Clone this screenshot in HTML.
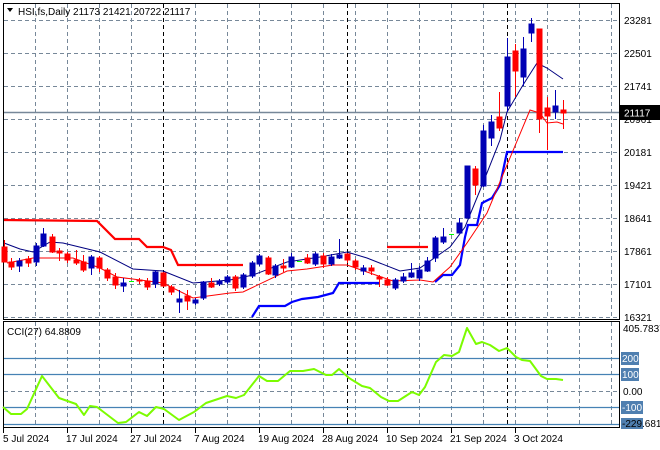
<!DOCTYPE html>
<html><head><meta charset="utf-8"><style>
html,body{margin:0;padding:0;background:#fff;}
svg{display:block;font-family:"Liberation Sans",sans-serif;}
</style></head><body>
<svg width="660" height="450" viewBox="0 0 660 450" xmlns="http://www.w3.org/2000/svg">
<rect width="660" height="450" fill="#fff"/>
<g stroke="#778899" stroke-width="1" stroke-dasharray="4,3" fill="none">
<path d="M4 20.5H619M4 53.5H619M4 86.5H619M4 119.5H619M4 152.5H619M4 185.5H619M4 218.5H619M4 251.5H619M4 284.5H619M4 317.5H619"/>
<path d="M35.5 4V320M67.5 4V320M99.5 4V320M131.5 4V320M195.5 4V320M227.5 4V320M259.5 4V320M291.5 4V320M323.5 4V320M355.5 4V320M387.5 4V320M419.5 4V320M451.5 4V320M483.5 4V320M515.5 4V320M547.5 4V320M579.5 4V320M611.5 4V320"/>
<path d="M35.5 322V425M67.5 322V425M99.5 322V425M131.5 322V425M195.5 322V425M227.5 322V425M259.5 322V425M291.5 322V425M323.5 322V425M355.5 322V425M387.5 322V425M419.5 322V425M451.5 322V425M483.5 322V425M515.5 322V425M547.5 322V425M579.5 322V425M611.5 322V425"/>
<path d="M4 391.5H619"/>
</g>
<g stroke="#000" stroke-width="1" stroke-dasharray="4,3">
<path d="M163.5 4V320M347.5 4V320M507.5 4V320M163.5 322V425M347.5 322V425M507.5 322V425"/>
</g>
<path d="M4 112.5H619" stroke="#778899" stroke-width="1.5"/>
<g stroke="#4682b4" stroke-width="1.2">
<path d="M4 358.5H619M4 374.5H619M4 407.5H619M4 424.5H619"/>
</g>
<g fill="none" stroke="#000" stroke-width="1">
<rect x="3.5" y="3.5" width="616" height="316"/>
<rect x="3.5" y="321.5" width="616" height="106"/>
</g>
<polyline fill="none" stroke="#f00" stroke-width="2.2" points="4,220 97,221 115,239 139,239 147,247 163,247 171,250 178,265 243,265"/>
<polyline fill="none" stroke="#f00" stroke-width="2.2" points="387,247 428,247"/>
<polyline fill="none" stroke="#0000ff" stroke-width="2.2" points="252,317 259,306 285,306 292,302 302,299 318,297 333,293 339,283 379,283"/>
<polyline fill="none" stroke="#0000ff" stroke-width="2.2" points="435,282 443,275 452,275 460,265 465,237 468,225 477,225 482,203 492,198 500,185 507,152 563,152"/>
<polyline fill="none" stroke="#000080" stroke-width="1" points="4,243 20,249 33,252 50,242 63,243 100,252 133,269 163,271 193,283 230,280 253,275 287,262 320,257 347,252 367,258 400,271 420,268 450,247 465,227 483,183 500,140 507,112 523,85 537,63 547,68 563,79"/>
<polyline fill="none" stroke="#f00" stroke-width="1" points="7,263 33,258 50,258 73,258 100,268 117,277 163,283 193,298 230,293 243,292 287,271 307,269 333,265 347,265 367,272 393,281 420,280 433,282 450,267 467,243 487,213 507,165 530,110 540,113 547,123 557,122 563,124"/>
<g>
<g fill="#f00" stroke="#f00">
<path d="M4.5 240V262M11.5 258V270M28.5 256V267M52.5 234V253M59.5 248V261M67.5 252V263M76.5 250V265M83.5 255V272M99.5 256V272M107.5 268V281M115.5 273V289M139.5 278V284M147.5 278V290M163.5 272V287M171.5 285V295M187.5 290V310M211.5 278V288M235.5 275V291M268.5 256V275M283.5 259V272M307.5 254V264M323.5 253V268M347.5 253V263M355.5 259V270M371.5 265V275M379.5 275V287M387.5 277V286M475.5 166V195M499.5 92V131M515.5 44V97M539.5 29V133M547.5 97V150M563.5 100V129" fill="none"/>
<rect x="2" y="247" width="5" height="15"/><rect x="9" y="262" width="5" height="5"/><rect x="26" y="259" width="5" height="4"/>
<rect x="50" y="237" width="5" height="15"/><rect x="57" y="251" width="5" height="2"/><rect x="65" y="254" width="5" height="6"/>
<rect x="74" y="260" width="5" height="3"/><rect x="81" y="262" width="5" height="8"/><rect x="97" y="258" width="5" height="10"/>
<rect x="105" y="270" width="5" height="8"/><rect x="113" y="277" width="5" height="8"/><rect x="137" y="280" width="5" height="1"/>
<rect x="145" y="281" width="5" height="6"/><rect x="161" y="273" width="5" height="13"/><rect x="169" y="287" width="5" height="5"/>
<rect x="185" y="296" width="5" height="5"/><rect x="209" y="283" width="5" height="4"/><rect x="233" y="277" width="5" height="11"/>
<rect x="266" y="258" width="5" height="16"/><rect x="281" y="266" width="5" height="2"/><rect x="305" y="258" width="5" height="5"/>
<rect x="321" y="256" width="5" height="8"/><rect x="345" y="254" width="5" height="6"/><rect x="353" y="261" width="5" height="6"/>
<rect x="369" y="268" width="5" height="3"/><rect x="377" y="277" width="5" height="2"/><rect x="385" y="280" width="5" height="5"/>
<rect x="473" y="169" width="5" height="16"/><rect x="497" y="117" width="5" height="11"/><rect x="513" y="51" width="5" height="20"/>
<rect x="537" y="29" width="5" height="90"/><rect x="545" y="108" width="5" height="8"/><rect x="561" y="110" width="5" height="3"/>
</g>
<g fill="#0000b4" stroke="#0000b4">
<path d="M19.5 258V272M36.5 243V266M43.5 228V247M91.5 255V275M123.5 278V292M155.5 270V288M179.5 290V313M195.5 298V305M203.5 281V300M219.5 279V286M227.5 275V284M243.5 273V289M252.5 261V278M259.5 254V266M275.5 264V278M291.5 253V268M315.5 252V266M331.5 254V266M339.5 239V259M363.5 265V275M395.5 278V290M403.5 273V283M411.5 263V278M419.5 266V281M427.5 257V272M435.5 236V262M443.5 228V244M459.5 218V233M467.5 166V218M483.5 125V187M491.5 115V146M507.5 38V112M523.5 37V86M531.5 18V42M555.5 90V119" fill="none"/>
<rect x="17" y="261" width="5" height="5"/><rect x="34" y="246" width="5" height="16"/><rect x="41" y="234" width="5" height="12"/>
<rect x="89" y="257" width="5" height="11"/><rect x="121" y="283" width="5" height="3"/><rect x="153" y="272" width="5" height="12"/>
<rect x="177" y="299" width="5" height="3"/><rect x="193" y="300" width="5" height="3"/><rect x="201" y="282" width="5" height="16"/>
<rect x="217" y="281" width="5" height="3"/><rect x="225" y="277" width="5" height="5"/><rect x="241" y="275" width="5" height="12"/>
<rect x="250" y="263" width="5" height="13"/><rect x="257" y="256" width="5" height="8"/><rect x="273" y="266" width="5" height="9"/>
<rect x="289" y="257" width="5" height="10"/><rect x="313" y="254" width="5" height="10"/><rect x="329" y="257" width="5" height="7"/>
<rect x="337" y="255" width="5" height="3"/><rect x="361" y="268" width="5" height="3"/><rect x="393" y="280" width="5" height="8"/>
<rect x="401" y="277" width="5" height="4"/><rect x="409" y="273" width="5" height="4"/><rect x="417" y="270" width="5" height="8"/>
<rect x="425" y="261" width="5" height="10"/><rect x="433" y="238" width="5" height="20"/><rect x="441" y="237" width="5" height="5"/>
<rect x="457" y="223" width="5" height="10"/><rect x="465" y="166" width="5" height="52"/><rect x="481" y="131" width="5" height="55"/>
<rect x="489" y="122" width="5" height="16"/><rect x="505" y="57" width="5" height="49"/><rect x="521" y="49" width="5" height="28"/>
<rect x="529" y="24" width="5" height="9"/><rect x="553" y="106" width="5" height="6"/>
</g>
<g stroke="#00ff00" stroke-width="1"><path d="M129 281.5H134M297 261.5H302M449 234.5H454"/></g>
</g>
<polyline fill="none" stroke="#7cfc00" stroke-width="2" stroke-linejoin="round" points="3,407 11,414 21,414 27,409 42,376 59,398 76,404 84,415 90,406 97,407 118,423 126,422 139,412 147,416 156,407 164,409 179,420 194,412 206,403 215,400 227,396 236,398 244,395 259,376 267,381 278,381 290,371 303,371 314,369 326,375 332,375 339,369 349,378 362,386 370,388 381,397 389,401 398,401 412,392 419,395 425,387 436,362 444,355 452,356 459,352 467,328 476,344 482,342 490,345 499,351 507,348 516,357 522,360 530,361 541,376 547,379 556,379 563,380"/>
<path d="M7 8L13 8L10 12Z" fill="#000"/>
<text x="18" y="15" font-size="10" fill="#000">HSI,fs,Daily  21173 21421 20722 21117</text>
<text x="7" y="335" font-size="10" fill="#000">CCI(27) 64.8809</text>
<g font-size="10" fill="#000">
<text x="624" y="24">23281</text><text x="624" y="57">22501</text><text x="624" y="90">21741</text>
<text x="624" y="123">20961</text><text x="624" y="156">20181</text><text x="624" y="189">19421</text>
<text x="624" y="222">18641</text><text x="624" y="255">17861</text><text x="624" y="288">17101</text>
<text x="624" y="321">16321</text>
</g>
<rect x="620" y="105" width="40" height="15" fill="#000"/>
<text x="624" y="116.5" font-size="10" fill="#fff">21117</text>
<text x="623" y="332" font-size="10" fill="#000">405.7837</text>
<rect x="621" y="352" width="18" height="13" fill="#4f7fb0"/><text x="622" y="362" font-size="10" fill="#fff">200</text>
<rect x="621" y="368" width="18" height="13" fill="#4f7fb0"/><text x="622" y="378" font-size="10" fill="#fff">100</text>
<text x="623" y="395" font-size="10" fill="#000">0.00</text>
<rect x="621" y="401" width="22" height="13" fill="#4f7fb0"/><text x="622" y="411" font-size="10" fill="#fff">-100</text>
<rect x="621" y="418" width="22" height="11" fill="#4f7fb0"/><text x="622" y="427" font-size="10" fill="#000">-229.6818</text>
<g stroke="#000"><path d="M3.5 428V433M67.5 428V433M131.5 428V433M195.5 428V433M259.5 428V433M323.5 428V433M387.5 428V433M451.5 428V433M515.5 428V433"/></g>
<g font-size="10" fill="#000">
<text x="3" y="442">5 Jul 2024</text><text x="66" y="442">17 Jul 2024</text><text x="130" y="442">27 Jul 2024</text>
<text x="194" y="442">7 Aug 2024</text><text x="258" y="442">19 Aug 2024</text><text x="322" y="442">28 Aug 2024</text>
<text x="386" y="442">10 Sep 2024</text><text x="450" y="442">21 Sep 2024</text><text x="514" y="442">3 Oct 2024</text>
</g>
</svg>
</body></html>
